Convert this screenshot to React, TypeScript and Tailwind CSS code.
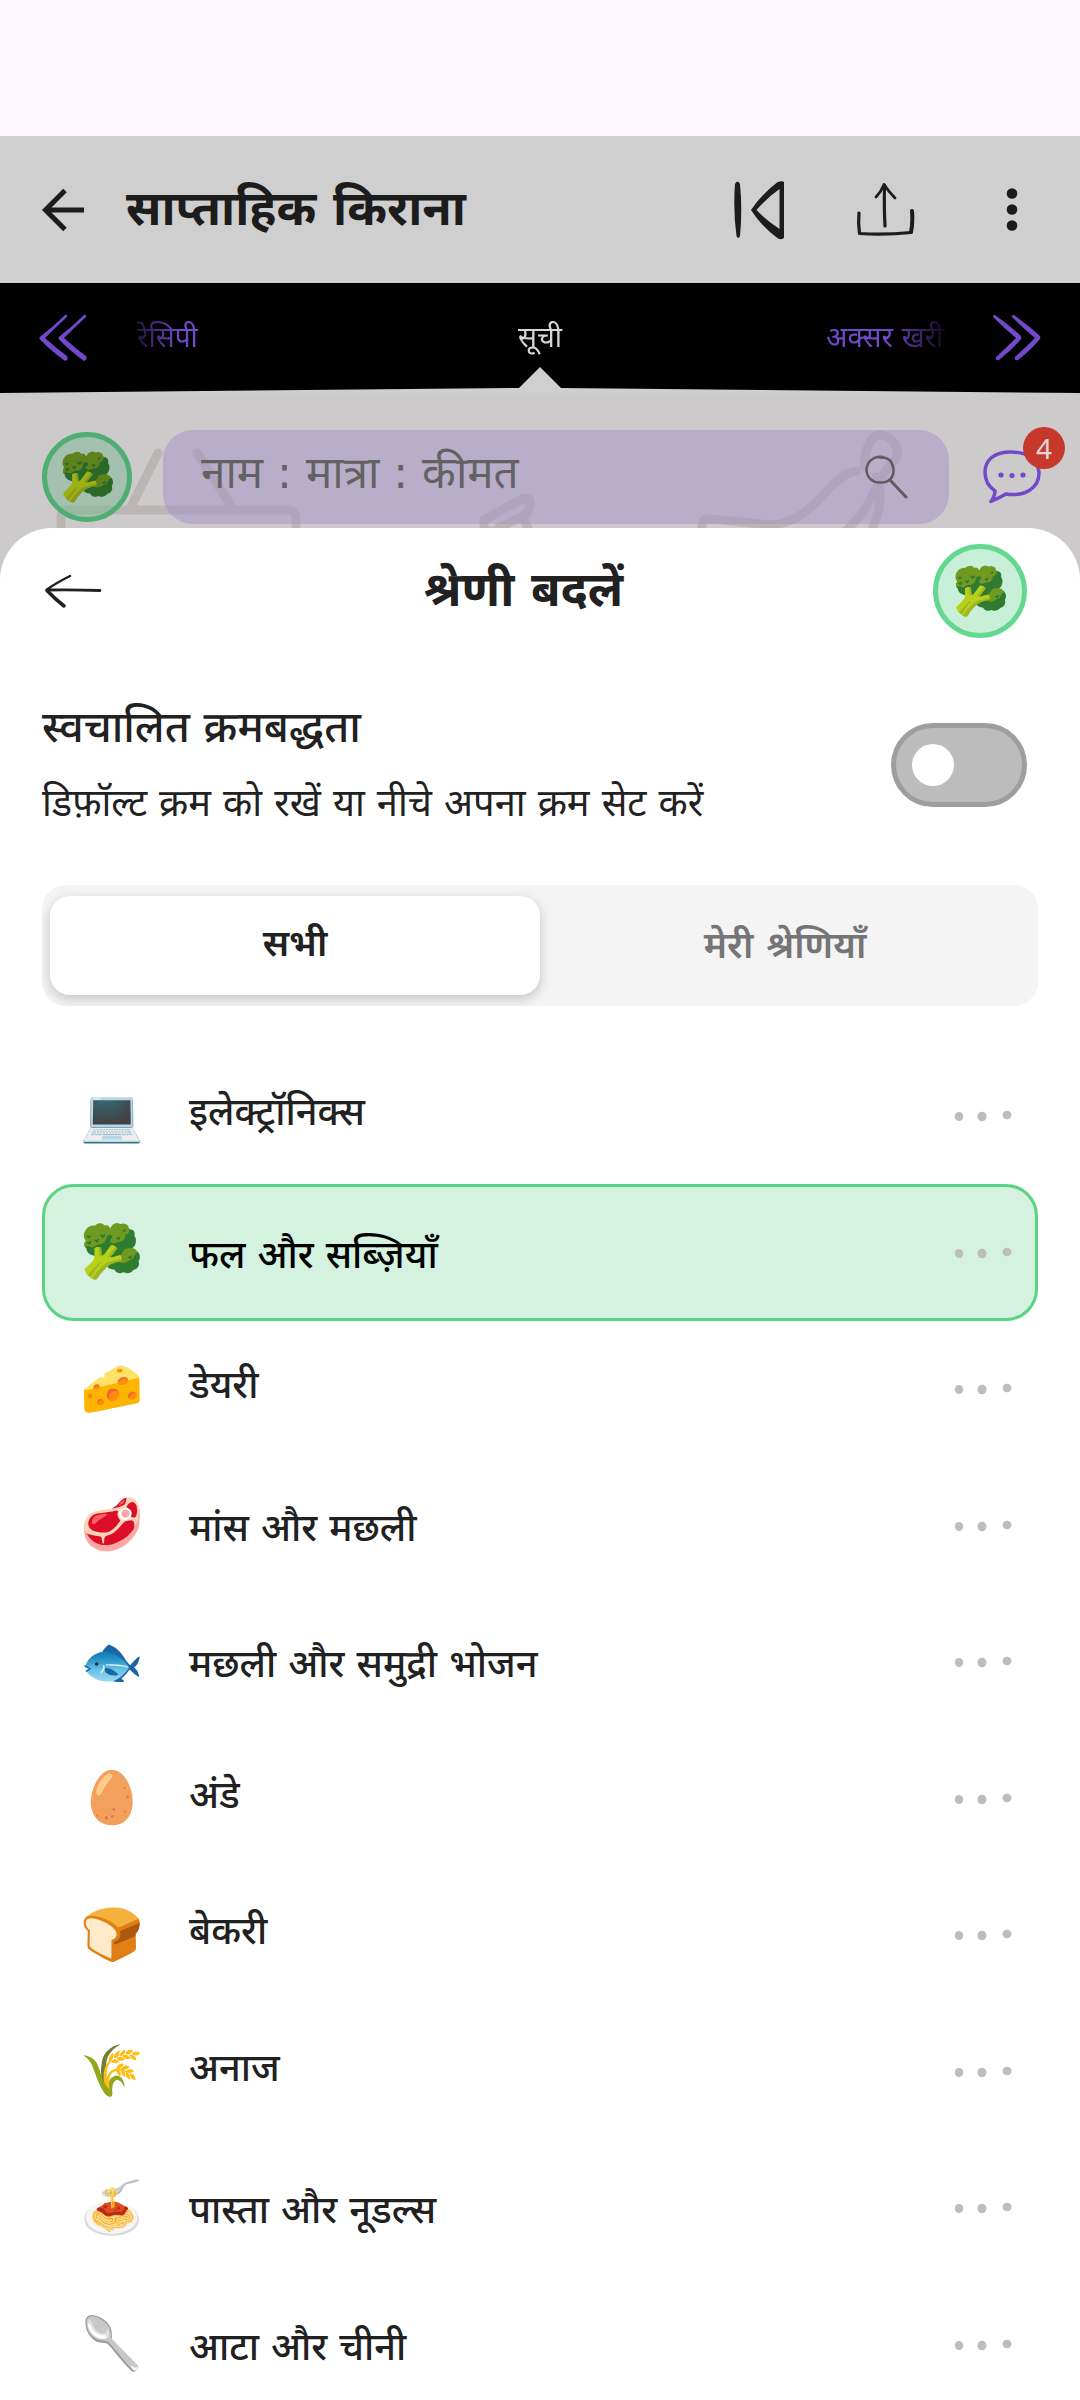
import { useState } from 'react';

interface Category {
  icon: string;
  name: string;
}

const categories: Category[] = [
  { icon: '💻', name: 'इलेक्ट्रॉनिक्स' },
  { icon: '🥦', name: 'फल और सब्ज़ियाँ' },
  { icon: '🧀', name: 'डेयरी' },
  { icon: '🥩', name: 'मांस और मछली' },
  { icon: '🐟', name: 'मछली और समुद्री भोजन' },
  { icon: '🥚', name: 'अंडे' },
  { icon: '🍞', name: 'बेकरी' },
  { icon: '🌾', name: 'अनाज' },
  { icon: '🍝', name: 'पास्ता और नूडल्स' },
  { icon: '🥄', name: 'आटा और चीनी' },
];

function ArrowBackIcon() {
  return (
    <svg width="44" height="44" viewBox="0 0 44 44" fill="none" stroke="#1c1c1c" strokeWidth="5">
      <path d="M43 22H5M24 2.500L4.500 22L24 41.500" />
    </svg>
  );
}

function SkipBackIcon() {
  return (
    <svg width="50" height="60" viewBox="0 0 50 60" fill="#1c1c1c">
      <path d="M1 4Q3.500 -1 6 4Q8.500 30 6 56Q4 60 2.500 56Q-1 30 1 4Z" />
      <path
        fillRule="evenodd"
        d="M17 30Q28 14 43 2.500Q51 -1 51 5V55Q50 61 44 58.500Q28 47 17 30ZM22.500 30Q32 40 45.500 49V9Q34 17 22.500 30Z"
      />
    </svg>
  );
}

function ShareIcon() {
  return (
    <svg width="60" height="60" viewBox="0 0 60 60" fill="none" stroke="#1c1c1c" strokeLinecap="round" strokeLinejoin="round">
      <path d="M29.500 5Q29 28 30 46" strokeWidth="3.200" />
      <path d="M21 17Q26 12 29 4.500Q34 12 40 18" strokeWidth="2.800" />
      <path d="M4 33Q3 43 4.500 53.500Q30 55 56 52.500" strokeWidth="3.200" />
      <path d="M57 31Q58 43 56 52" strokeWidth="4" />
    </svg>
  );
}

function MoreVerticalIcon() {
  return (
    <svg width="12" height="44" viewBox="0 0 12 44" fill="#1c1c1c">
      <circle cx="6" cy="5.500" r="5.300" />
      <circle cx="6" cy="21.500" r="5.300" />
      <circle cx="6" cy="37.500" r="5.300" />
    </svg>
  );
}

function ChevronsLeftIcon() {
  return (
    <svg width="50" height="48" viewBox="0 0 50 48" fill="#7149ca">
      <path d="M26 1Q29 0 28 3Q17 13 6 24Q17 34 28 42Q30 46 26 47Q11 36 0.500 25Q0 23 2 22Q14 13 26 1Z" />
      <path d="M45 1Q48 0 47 3Q36 13 25 24Q36 34 47 42Q49 46 45 47Q30 36 19.500 25Q19 23 21 22Q33 13 45 1Z" />
    </svg>
  );
}

function ChevronsRightIcon() {
  return (
    <svg width="50" height="48" viewBox="0 0 50 48" fill="#7149ca">
      <path d="M2 1Q-1 1 0 3Q12 15 23 24Q14 33 3 43Q2 47 6 46Q19 36 28 25Q29 23 27 21Q16 11 2 1Z" />
      <path d="M21 1Q18 1 19 3Q31 15 42 24Q33 33 22 43Q21 47 25 46Q38 36 47 25Q48 23 46 21Q35 11 21 1Z" />
    </svg>
  );
}

function SearchIcon() {
  return (
    <svg width="44" height="44" viewBox="0 0 44 44" fill="none" stroke="#5f5c5f" strokeWidth="2.500" strokeLinecap="round">
      <path d="M18 2C8 0 1.500 8 1.500 15C2 23 8 28 15 27.500C24 28 29 22 28.500 15C28 7 24 2 15 2.500" />
      <path d="M25 25L41 42" strokeWidth="3" />
    </svg>
  );
}

function ChatIcon() {
  return (
    <svg width="58" height="54" viewBox="0 0 58 54" fill="none" stroke="#7149ca" strokeWidth="3.500" strokeLinejoin="round">
      <path d="M28 2C11 2 2 10 2 22C2 31 6 37 12 41Q12 46 8 51.500Q16 48 23 44C42 47 56 38 56 23C55 9 44 2 28 2Z" />
      <g fill="#7149ca" stroke="none">
        <circle cx="18" cy="25" r="2.600" />
        <circle cx="29" cy="25.500" r="2.600" />
        <circle cx="40" cy="25" r="2.600" />
      </g>
    </svg>
  );
}

function SheetBackIcon() {
  return (
    <svg width="60" height="36" viewBox="0 0 60 36" fill="none" stroke="#212121" strokeLinecap="round" strokeLinejoin="round">
      <path d="M5 17Q30 16.500 58 17.500" strokeWidth="2.800" />
      <path d="M28 3Q14 10 5 16.500" strokeWidth="2.500" />
      <path d="M5 17.500Q13 26 22 33" strokeWidth="3.500" />
    </svg>
  );
}

function MoreIcon() {
  return (
    <svg width="58" height="14" viewBox="0 0 58 14" fill="#bdbdbd">
      <ellipse cx="5" cy="7.500" rx="4.200" ry="4.600" />
      <ellipse cx="28" cy="7.500" rx="4.500" ry="4.800" />
      <ellipse cx="53" cy="6" rx="4.500" ry="4.200" />
    </svg>
  );
}

// faint grocery doodles behind the search row
function Doodles() {
  return (
    <svg
      className="absolute inset-0 w-full h-full"
      viewBox="0 0 1080 185"
      preserveAspectRatio="xMidYMin slice"
      fill="none"
      stroke="#bbb6b4"
      strokeWidth="9"
      strokeLinecap="round"
      strokeLinejoin="round"
    >
      <path d="M158 60L131 114M197 60L232 114M61 170V124Q61 117 68 117H288Q296 117 296 126V170" />
      <path d="M484 127L520 107Q534 101 529 116Q527 121 519 125L493 138Q482 138 484 127ZM498 140L506 160M524 127L536 150" />
      <path d="M704 150Q698 126 708 126Q735 128 770 132C815 130 828 82 856 78M864 74C866 45 876 38 888 44Q902 56 896 66C872 86 882 110 832 150M876 84Q888 106 866 150" />
    </svg>
  );
}

export default function App() {
  const [selected, setSelected] = useState('फल और सब्ज़ियाँ');
  const [tab, setTab] = useState<'all' | 'mine'>('all');
  const [autoSort, setAutoSort] = useState(false);

  const activeIcon = categories.find((c) => c.name === selected)?.icon;

  return (
    <div className="h-screen overflow-hidden bg-[#cccacb] font-['DejaVu_Sans','Noto_Sans_Devanagari','Noto_Sans',sans-serif] text-[#212121]">
      <div className="h-[136px] bg-[#fbf6ff]" />

      <header className="h-[147px] bg-[#cfcfcf] flex items-center pl-[41px] pr-[62px]">
        <button aria-label="वापस">
          <ArrowBackIcon />
        </button>
        <h1 className="flex-1 pl-[41px] pb-1 text-[48px] leading-[64px] font-bold text-[#1c1c1c]">साप्ताहिक किराना</h1>
        <div className="flex items-center">
          <button aria-label="पीछे जाएँ">
            <SkipBackIcon />
          </button>
          <button aria-label="साझा करें" className="ml-[71px]">
            <ShareIcon />
          </button>
          <button aria-label="और विकल्प" className="ml-[91px]">
            <MoreVerticalIcon />
          </button>
        </div>
      </header>

      <nav className="relative h-[110px] bg-black flex items-center text-[28px] leading-[36px] text-[#7149ca]">
        <button aria-label="पिछला" className="w-[135px] pl-[39px]">
          <ChevronsLeftIcon />
        </button>
        <div className="flex-1 flex items-center overflow-hidden whitespace-nowrap mask-[linear-gradient(to_right,transparent_-15px,black_45px,black_calc(100%-56px),transparent_calc(100%+8px))]">
          <a href="#recipe" className="w-[119px] pl-0.5">रेसिपी</a>
          <a href="#list" className="flex-1 text-center text-[#d6d6d6]">सूची</a>
          <a href="#frequent" className="w-[119px]">अक्सर खरीदे</a>
        </div>
        <button aria-label="अगला" className="w-[135px] pl-[48px]">
          <ChevronsRightIcon />
        </button>
        <svg className="absolute bottom-0 left-0 w-full h-[26px]" viewBox="0 0 1080 26" preserveAspectRatio="none" fill="#cfcfcf">
          <path d="M0 26L519 21L540 0L561 21L1080 26Z" />
        </svg>
      </nav>

      <section className="relative pt-[37px] pb-[54px] pl-[42px] pr-[39px]">
        <Doodles />
        <div className="relative flex items-center">
          <button
            aria-label="श्रेणी"
            className="size-[90px] rounded-full border-[5px] border-[#50ae73] bg-[#7ab891]/50 flex items-center justify-center text-[46px] leading-none"
          >
            <span className="brightness-85">{activeIcon}</span>
          </button>
          <label className="ml-[31px] flex-1 h-[94px] rounded-[30px] bg-[#a492c7]/50 flex items-center pl-[38px] pr-[40px]">
            <input
              type="text"
              aria-label="आइटम जोड़ें"
              placeholder="नाम : मात्रा : कीमत"
              className="flex-1 min-w-0 pb-2 bg-transparent outline-none text-[44px] leading-[60px] placeholder:text-[#636263]"
            />
            <SearchIcon />
          </label>
          <button aria-label="चैट" className="relative ml-[34px]">
            <ChatIcon />
            <span className="absolute -top-[23px] -right-[24px] size-[42px] rounded-full bg-[#c7382c] text-[#e0d6d5] font-['Noto_Sans',sans-serif] text-[28px] leading-[42px] text-center">
              4
            </span>
          </button>
        </div>
      </section>

      <main className="relative -mt-[50px] rounded-t-[52px] bg-white pt-[16px]">
        <div className="flex items-center pl-[42px] pr-[53px]">
          <button aria-label="बंद करें" className="w-[72px]">
            <SheetBackIcon />
          </button>
          <h2 className="flex-1 pb-1 text-center text-[48px] leading-[64px] font-bold">श्रेणी बदलें</h2>
          <span className="size-[94px] rounded-full border-[5px] border-[#64d88f] bg-[#c8f0d8] flex items-center justify-center text-[46px] leading-none">
            {activeIcon}
          </span>
        </div>

        <label className="mt-[57px] pl-[42px] pr-[53px] flex items-center justify-between">
          <span>
            <span className="block text-[43px] leading-[64px] font-medium">स्वचालित क्रमबद्धता</span>
            <span className="block mt-3 text-[38px] leading-[64px]">डिफ़ॉल्ट क्रम को रखें या नीचे अपना क्रम सेट करें</span>
          </span>
          <input
            type="checkbox"
            role="switch"
            checked={autoSort}
            onChange={(e) => setAutoSort(e.target.checked)}
            className="appearance-none w-[136px] h-[84px] rounded-full border-[5px] border-[#9e9e9e] bg-[#bcbcbc] flex items-center px-4 before:size-[42px] before:rounded-full before:bg-white checked:justify-end checked:bg-[#64d88f]"
          />
        </label>

        <div className="mt-[50px] mx-[42px] h-[121px] rounded-3xl bg-[#f4f4f4] flex items-center px-2 text-[37px] leading-[56px] font-semibold overflow-hidden">
          <button
            onClick={() => setTab('all')}
            className={tab === 'all' ? 'flex-1 h-[99px] rounded-[20px] pb-1 bg-white shadow-[0_4px_12px_rgba(0,0,0,0.2)]' : 'flex-1 h-[99px] text-[#757575]'}
          >
            सभी
          </button>
          <button
            onClick={() => setTab('mine')}
            className={tab === 'mine' ? 'flex-1 h-[99px] rounded-[20px] bg-white shadow-[0_4px_12px_rgba(0,0,0,0.2)]' : 'flex-1 h-[99px] text-[#757575]'}
          >
            मेरी श्रेणियाँ
          </button>
        </div>

        <ul className="mt-[42px] mx-[42px]">
          {categories.map((category) => (
            <li
              key={category.name}
              className={
                category.name === selected
                  ? 'h-[136px] even:h-[137px] flex items-center rounded-[32px] border-[3px] border-[#5ad482] bg-[#d4f2df] text-black'
                  : 'h-[136px] even:h-[137px] flex items-center border-[3px] border-transparent'
              }
            >
              <button
                onClick={() => setSelected(category.name)}
                className="flex-1 h-full flex items-center text-left"
              >
                <span className="w-[144px] pl-[35px] pb-0.5 text-[51px] leading-none">{category.icon}</span>
                <span
                  className={
                    category.name.includes(' ')
                      ? 'pt-1 text-[38px] leading-[56px] font-medium'
                      : 'pb-2 text-[38px] leading-[56px] font-medium'
                  }
                >
                  {category.name}
                </span>
              </button>
              <button aria-label="विकल्प" className="pr-[23px]">
                <MoreIcon />
              </button>
            </li>
          ))}
        </ul>
      </main>
    </div>
  );
}
